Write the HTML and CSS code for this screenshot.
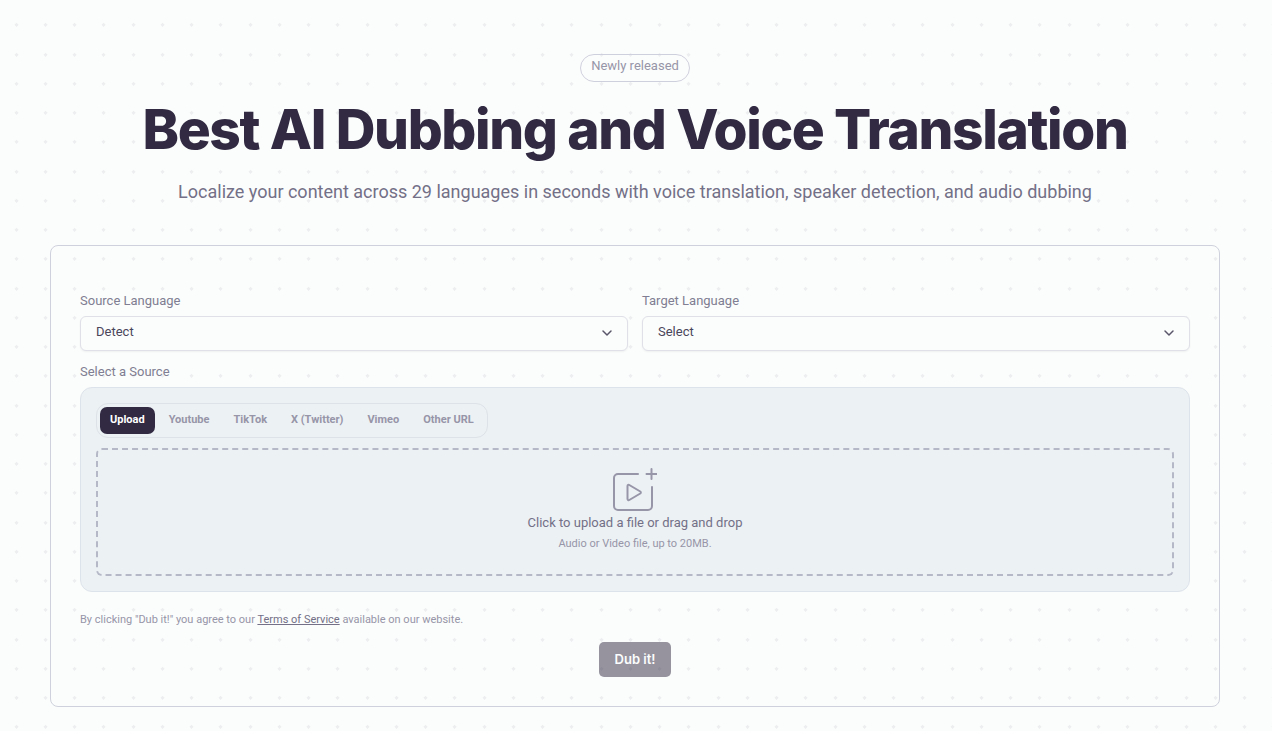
FILE: index.html
```html
<!DOCTYPE html>
<html lang="en">
<head>
    <meta charset="UTF-8">
    <meta name="viewport" content="width=device-width, initial-scale=1.0">
    <title>Best AI Dubbing and Voice Translation</title>
    <link rel="stylesheet" href="styles.css">
</head>
<body>
    <main class="page">
        <header class="hero">
            <span class="badge">Newly released</span>
            <h1>Best AI Dubbing and Voice Translation</h1>
            <p class="subtitle">Localize your content across 29 languages in seconds with voice translation, speaker detection, and audio dubbing</p>
        </header>

        <form class="card">
            <div class="languages">
                <div class="field">
                    <label for="source-language">Source Language</label>
                    <div class="select-box">
                        <select id="source-language">
                            <option>Detect</option>
                        </select>
                        <svg class="chevron" viewBox="0 0 10 6" aria-hidden="true"><path d="M1 1l4 4 4-4"/></svg>
                    </div>
                </div>
                <div class="field">
                    <label for="target-language">Target Language</label>
                    <div class="select-box">
                        <select id="target-language">
                            <option>Select</option>
                        </select>
                        <svg class="chevron" viewBox="0 0 10 6" aria-hidden="true"><path d="M1 1l4 4 4-4"/></svg>
                    </div>
                </div>
            </div>

            <div class="field source">
                <label for="file">Select a Source</label>
                <div class="panel">
                    <div class="tabs">
                        <button type="button" class="tab active">Upload</button>
                        <button type="button" class="tab">Youtube</button>
                        <button type="button" class="tab">TikTok</button>
                        <button type="button" class="tab">X (Twitter)</button>
                        <button type="button" class="tab">Vimeo</button>
                        <button type="button" class="tab">Other URL</button>
                    </div>
                    <label class="dropzone" for="file">
                        <svg class="upload-icon" viewBox="0 0 44 44" aria-hidden="true">
                            <path d="M25 6H5a4 4 0 0 0-4 4v28a4 4 0 0 0 4 4h30a4 4 0 0 0 4-4V19"/>
                            <path d="M38.500 1v10M33.500 6h10"/>
                            <path d="M14.500 18v13a1.200 1.200 0 0 0 1.800 1l11-6.500a1.200 1.200 0 0 0 0-2l-11-6.500a1.200 1.200 0 0 0-1.800 1z"/>
                        </svg>
                        <span class="dropzone-title">Click to upload a file or drag and drop</span>
                        <span class="dropzone-hint">Audio or Video file, up to 20MB.</span>
                        <input type="file" id="file" class="file-input">
                    </label>
                </div>
            </div>

            <p class="terms">By clicking "Dub it!" you agree to our <a href="#">Terms of Service</a> available on our website.</p>
            <button type="submit" class="submit">Dub it!</button>
        </form>
    </main>
</body>
</html>
```
FILE: styles.css
```css
* {
    box-sizing: border-box;
}
body {
    margin: 0;
    font-family: Roboto, sans-serif;
    font-size: 13px;
    color: #312a42;
    background-color: #fbfdfc;
    background-image: url("data:image/svg+xml,%3Csvg xmlns='http://www.w3.org/2000/svg' viewBox='0 0 29 29'%3E%3Cpath d='M16 23l2 2-2 2-2-2z' fill='%23eceef0'/%3E%3C/svg%3E");
    background-size: 2.3vw 2.3vw;
}
.page {
    padding: 54px 52px 24px 50px;
}
.hero {
    display: flex;
    flex-direction: column;
    align-items: center;
    text-align: center;
}
.badge {
    height: 28px;
    padding: 0 10px;
    border: 1px solid #cfd0dd;
    border-radius: 14px;
    line-height: 22px;
    color: #9795a8;
}
h1 {
    margin: 15px 0 0;
    font-family: Inter, sans-serif;
    font-size: 55px;
    font-weight: 800;
    line-height: 64px;
    letter-spacing: -0.025em;
}
.subtitle {
    margin: 17px 0 0;
    font-size: 18px;
    line-height: 28px;
    color: #737087;
}
.card {
    display: flex;
    flex-direction: column;
    margin-top: 39px;
    padding: 46px 29px 29px;
    border: 1px solid #cfd2dc;
    border-radius: 8px;
}
.languages {
    display: grid;
    grid-template-columns: 1fr 1fr;
    gap: 14px;
}
.field {
    display: flex;
    flex-direction: column;
    gap: 6px;
    line-height: 18px;
    color: #807e92;
}
.select-box {
    position: relative;
}
.select-box select {
    display: block;
    width: 100%;
    height: 35px;
    padding: 0 32px 4px 15px;
    border: 1px solid #dfe0e8;
    border-radius: 6px;
    appearance: none;
    background-color: #fbfdfc;
    box-shadow: 0 1px 2px rgba(49, 42, 66, 0.06);
    font: inherit;
    color: #4a455a;
}
.chevron {
    position: absolute;
    top: 14px;
    right: 16px;
    width: 10px;
    height: 6px;
    overflow: visible;
    pointer-events: none;
}
.chevron path {
    fill: none;
    stroke: #5a566a;
    stroke-width: 1.5;
    stroke-linecap: round;
    stroke-linejoin: round;
}
.source {
    margin-top: 12px;
}
.panel {
    padding: 15px;
    border: 1px solid #dde3ea;
    border-radius: 12px;
    background-color: #ecf1f4;
}
.tabs {
    display: inline-flex;
    gap: 4px;
    padding: 3px;
    border: 1px solid #dde2e8;
    border-radius: 12px;
}
.tab {
    height: 27px;
    padding: 0 10px 3px;
    border: 0;
    border-radius: 7px;
    background: none;
    font: 700 11px Roboto, sans-serif;
    color: #9795a8;
}
.tab.active {
    background-color: #312a42;
    color: #fff;
}
.dropzone {
    display: flex;
    flex-direction: column;
    align-items: center;
    height: 128px;
    margin-top: 10px;
    padding-top: 18px;
    border: 2px dashed #b5b8c6;
    border-radius: 6px;
}
.upload-icon {
    width: 44px;
    height: 44px;
}
.upload-icon path {
    fill: none;
    stroke: #9795a8;
    stroke-width: 2;
    stroke-linecap: round;
    stroke-linejoin: round;
}
.dropzone-title {
    line-height: 22px;
    color: #737087;
}
.dropzone-hint {
    font-size: 11px;
    line-height: 20px;
    color: #9795a8;
}
.file-input {
    width: 0;
    height: 0;
    opacity: 0;
}
.terms {
    margin: 19px 0 0;
    font-size: 11px;
    line-height: 18px;
    color: #9795a8;
}
.terms a {
    color: #737087;
}
.submit {
    align-self: center;
    height: 35px;
    margin-top: 13px;
    padding: 0 16px 2px;
    border: 0;
    border-radius: 5px;
    background-color: rgba(49, 42, 66, 0.5);
    font: 600 13px Inter, sans-serif;
    color: #fbfdfc;
}
```
